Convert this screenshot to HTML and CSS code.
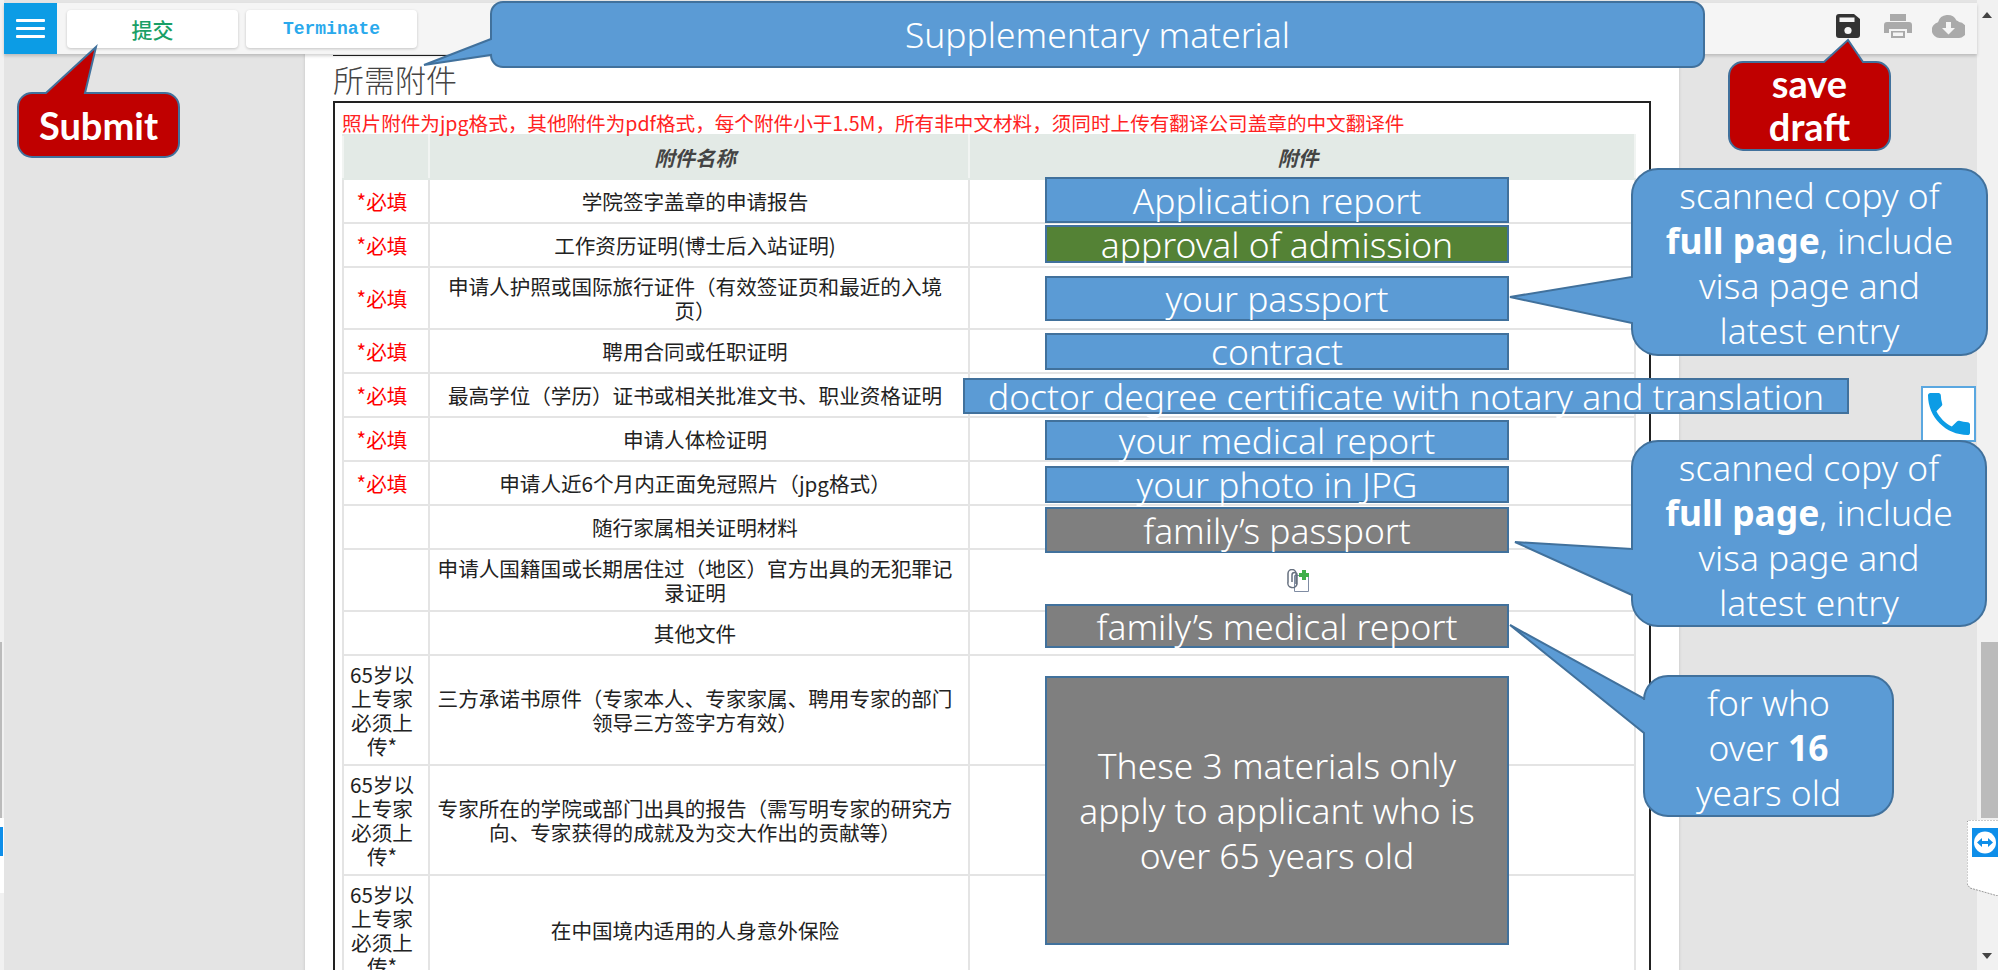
FILE: index.html
```html
<!DOCTYPE html>
<html lang="zh-CN">
<head>
    <meta charset="UTF-8">
    <title>所需附件</title>
    <link rel="stylesheet" href="styles.css">
</head>
<body>
    <div class="window">
        <div class="side-strip">
            <div class="strip-thumb"></div>
            <div class="strip-tab"><div class="strip-tab-blue"></div></div>
        </div>

        <div class="main">
            <header class="topbar">
                <button class="menu-btn" type="button" aria-label="menu">
                    <span></span><span></span><span></span>
                </button>
                <button class="tool-btn submit-btn" type="button">提交</button>
                <button class="tool-btn stop-btn" type="button">Terminate</button>
                <div class="top-icons">
                    <svg class="icon-save" viewBox="0 0 24 24" width="24" height="24">
                        <path fill="#333" d="M3 0H18L24 5V21A3 3 0 0 1 21 24H3A3 3 0 0 1 0 21V3A3 3 0 0 1 3 0Z"/>
                        <rect x="3.500" y="3.500" width="15" height="4.500" fill="#f5f5f5"/>
                        <circle cx="12" cy="16.500" r="3.600" fill="#f5f5f5"/>
                    </svg>
                    <svg class="icon-print" viewBox="0 0 28 24" width="28" height="24">
                        <path fill="#aaa" d="M6 0H22V7H6Z"/>
                        <path fill="#aaa" d="M3 8H25A3 3 0 0 1 28 11V19H23V15H5V19H0V11A3 3 0 0 1 3 8Z"/>
                        <path fill="#aaa" d="M7 17H21V24H7Z"/>
                        <rect x="9" y="18.500" width="10" height="3.500" fill="#f5f5f5"/>
                    </svg>
                    <svg class="icon-cloud" viewBox="0 0 33 24" width="33" height="24">
                        <path fill="#aaa" d="M8 24A8 8 0 0 1 6 8.200 A10 10 0 0 1 24.500 6.500 A5 5 0 0 1 27 8 A8 8 0 0 1 26 24Z"/>
                        <path fill="#f5f5f5" d="M14 8H19V14H23L16.500 20.500 10 14H14Z"/>
                    </svg>
                </div>
            </header>

            <div class="content">
                <section class="paper">
                    <div class="prev-rule"></div>
                    <h2 class="section-title">所需附件</h2>
                    <div class="frame">
                        <p class="note">照片附件为jpg格式，其他附件为pdf格式，每个附件小于1.5M，所有非中文材料，须同时上传有翻译公司盖章的中文翻译件</p>
                        <table class="files">
                            <colgroup>
                                <col class="col-flag">
                                <col class="col-name">
                                <col class="col-file">
                            </colgroup>
                            <thead>
                                <tr><th></th><th>附件名称</th><th>附件</th></tr>
                            </thead>
                            <tbody>
                                <tr><td class="req">*必填</td><td>学院签字盖章的申请报告</td><td></td></tr>
                                <tr><td class="req">*必填</td><td>工作资历证明(博士后入站证明)</td><td></td></tr>
                                <tr><td class="req">*必填</td><td>申请人护照或国际旅行证件（有效签证页和最近的入境页）</td><td></td></tr>
                                <tr><td class="req">*必填</td><td>聘用合同或任职证明</td><td></td></tr>
                                <tr><td class="req">*必填</td><td>最高学位（学历）证书或相关批准文书、职业资格证明</td><td></td></tr>
                                <tr><td class="req">*必填</td><td>申请人体检证明</td><td></td></tr>
                                <tr><td class="req">*必填</td><td>申请人近6个月内正面免冠照片（jpg格式）</td><td></td></tr>
                                <tr><td></td><td>随行家属相关证明材料</td><td></td></tr>
                                <tr>
                                    <td></td>
                                    <td>申请人国籍国或长期居住过（地区）官方出具的无犯罪记录证明</td>
                                    <td>
                                        <svg class="clip-icon" viewBox="0 0 24 23" width="24" height="23">
                                            <path fill="#fff" stroke="#7f8ca3" d="M8.500 6.500H22.500V22.500H8.500Z"/>
                                            <path fill="none" stroke="#66707f" stroke-width="1.500" d="M10 15V4.500A3.500 3.500 0 0 0 2 4.500V13A4 4 0 0 0 11 15V6A2 2 0 0 0 6 6V13"/>
                                            <path fill="#3fae49" d="M16 1H20V4H23V8H20V11H16V8H13V4H16Z"/>
                                        </svg>
                                    </td>
                                </tr>
                                <tr><td></td><td>其他文件</td><td></td></tr>
                                <tr><td class="over65">65岁以上专家必须上传*</td><td>三方承诺书原件（专家本人、专家家属、聘用专家的部门领导三方签字方有效）</td><td></td></tr>
                                <tr><td class="over65">65岁以上专家必须上传*</td><td>专家所在的学院或部门出具的报告（需写明专家的研究方向、专家获得的成就及为交大作出的贡献等）</td><td></td></tr>
                                <tr><td class="over65">65岁以上专家必须上传*</td><td>在中国境内适用的人身意外保险</td><td></td></tr>
                            </tbody>
                        </table>
                    </div>
                </section>
            </div>
        </div>

        <div class="scrollbar">
            <div class="arrow-up"></div>
            <div class="scroll-thumb"></div>
            <div class="arrow-down"></div>
        </div>
    </div>

    <!-- annotations drawn over the screenshot -->
    <div class="phone-tab">
        <svg viewBox="3 3 18 18" width="42" height="42">
            <path fill="#0c9ce5" d="M6.620 10.790c1.440 2.830 3.760 5.140 6.590 6.590l2.200-2.200c.27-.27.67-.36 1.020-.24 1.120.37 2.330.57 3.570.57.550 0 1 .45 1 1V20c0 .55-.45 1-1 1-9.390 0-17-7.610-17-17 0-.55.45-1 1-1h3.500c.55 0 1 .45 1 1 0 1.250.2 2.450.57 3.570.11.350.03.740-.25 1.020l-2.200 2.200z"/>
        </svg>
    </div>

    <svg class="viewer-tab" viewBox="0 0 31 76" width="31" height="76">
        <path fill="#fff" stroke="#999" stroke-dasharray="2 1" d="M31 0H2L0 2V64L3 68L31 76"/>
        <rect x="5" y="8" width="26" height="29" fill="#0e8ee9"/>
        <circle cx="18" cy="22.500" r="11" fill="#fff"/>
        <path fill="#0e8ee9" d="M10 22.500L15 18V21H21V18L26 22.500 21 27V24H15V27Z"/>
    </svg>

    <svg class="callouts" viewBox="0 0 1998 970" width="1998" height="970">
        <g stroke="#41719c" stroke-width="2">
            <path class="c-blue" d="M503 2H1692A12 12 0 0 1 1704 14V55A12 12 0 0 1 1692 67H503A12 12 0 0 1 491 55L424 65L491 39V14A12 12 0 0 1 503 2Z"/>
            <path class="c-red" d="M32 93H46L96 47L85 93H165A14 14 0 0 1 179 107V143A14 14 0 0 1 165 157H32A14 14 0 0 1 18 143V107A14 14 0 0 1 32 93Z"/>
            <path class="c-red" d="M1743 62H1824L1848 40L1863 62H1876A14 14 0 0 1 1890 76V136A14 14 0 0 1 1876 150H1743A14 14 0 0 1 1729 136V76A14 14 0 0 1 1743 62Z"/>
            <path class="c-blue" d="M1658 169H1961A26 26 0 0 1 1987 195V329A26 26 0 0 1 1961 355H1658A26 26 0 0 1 1632 329V323L1510 297L1632 277V195A26 26 0 0 1 1658 169Z"/>
            <path class="c-blue" d="M1658 441H1960A26 26 0 0 1 1986 467V600A26 26 0 0 1 1960 626H1658A26 26 0 0 1 1632 600V595L1515 542L1632 549V467A26 26 0 0 1 1658 441Z"/>
            <path class="c-blue" d="M1668 676H1869A24 24 0 0 1 1893 700V792A24 24 0 0 1 1869 816H1668A24 24 0 0 1 1644 792V733L1510 625L1644 698.500V700A24 24 0 0 1 1668 676Z"/>
        </g>
    </svg>

    <div class="tag tag-supp"><span>Supplementary material</span></div>
    <div class="tag tag-submit"><span>Submit</span></div>
    <div class="tag tag-save"><span>save<br>draft</span></div>
    <div class="tag tag-scan1"><span>scanned copy of<br><b>full page</b>, include<br>visa page and<br>latest entry</span></div>
    <div class="tag tag-scan2"><span>scanned copy of<br><b>full page</b>, include<br>visa page and<br>latest entry</span></div>
    <div class="tag tag-who"><span>for who<br>over <b>16</b><br>years old</span></div>

    <div class="tag box box-app"><span>Application report</span></div>
    <div class="tag box box-approval"><span>approval of admission</span></div>
    <div class="tag box box-passport"><span>your passport</span></div>
    <div class="tag box box-contract"><span>contract</span></div>
    <div class="tag box box-degree"><span>doctor degree certificate with notary and translation</span></div>
    <div class="tag box box-medical"><span>your medical report</span></div>
    <div class="tag box box-photo"><span>your photo in JPG</span></div>
    <div class="tag box grey box-family"><span>family’s passport</span></div>
    <div class="tag box grey box-fammed"><span>family’s medical report</span></div>
    <div class="tag box grey box-over65"><span>These 3 materials only<br>apply to applicant who is<br>over 65 years old</span></div>
</body>
</html>
```

FILE: styles.css
```css
html, body {
    margin: 0;
    height: 970px;
    overflow: hidden;
}
body {
    position: relative;
    background-color: #e4e4e4;
    font-family: "Noto Sans CJK SC", "Noto Sans", sans-serif;
    color: #222;
}
.window {
    display: flex;
    height: 970px;
}

/* strip on the far left */
.side-strip {
    width: 4px;
    background-color: #f1f1f1;
    padding-top: 642px;
    flex-shrink: 0;
}
.strip-thumb {
    width: 2px;
    height: 176px;
    background-color: #bbb;
}
.strip-tab {
    height: 75px;
    background-color: #fff;
    padding-top: 9px;
    box-sizing: border-box;
}
.strip-tab-blue {
    width: 3px;
    height: 29px;
    background-color: #0e8ee9;
}

.main {
    flex: 1;
    display: flex;
    flex-direction: column;
    padding-top: 3px;
    min-width: 0;
}

/* top bar */
.topbar {
    position: relative;
    z-index: 1;
    display: flex;
    align-items: center;
    gap: 8px;
    height: 51px;
    flex-shrink: 0;
    background-color: #f5f5f5;
    box-shadow: 0 2px 3px rgba(0, 0, 0, 0.18);
}
.menu-btn {
    display: flex;
    flex-direction: column;
    justify-content: center;
    gap: 5px;
    width: 53px;
    height: 51px;
    margin-right: 2px;
    padding: 0 12px;
    border: none;
    background-color: #0c9ce5;
}
.menu-btn span {
    display: block;
    height: 3px;
    border-radius: 1px;
    background-color: #fff;
}
.tool-btn {
    width: 171px;
    height: 38px;
    padding: 0;
    border: none;
    border-radius: 4px;
    background-color: #fff;
    box-shadow: 0 1px 3px rgba(0, 0, 0, 0.2);
}
.submit-btn {
    color: #1a9f66;
    font-family: "Noto Sans CJK SC", sans-serif;
    font-size: 21px;
    font-weight: 500;
}
.stop-btn {
    color: #2aa9ec;
    font-family: "Liberation Mono", monospace;
    font-size: 18px;
    font-weight: bold;
}
.top-icons {
    display: flex;
    align-items: center;
    gap: 20px;
    margin-left: auto;
    padding: 0 12px 5px 0;
}
.icon-save {
    margin-right: 4px;
}

/* white page */
.content {
    flex: 1;
    min-height: 0;
    overflow: hidden;
}
.paper {
    width: 1374px;
    min-height: 100%;
    margin-left: 301px;
    padding: 1px 28px 0;
    box-sizing: border-box;
    background-color: #fff;
    box-shadow: 0 0 3px rgba(0, 0, 0, 0.15);
}
.prev-rule {
    height: 1px;
    background-color: #222;
}
.section-title {
    margin: 5px 0 4px;
    font-size: 31px;
    font-weight: 300;
    line-height: 36px;
    color: #444;
}
.frame {
    border: 2px solid #222;
    padding: 0 14px 0 7px;
}
.note {
    margin: 0;
    padding-top: 9px;
    font-size: 19.600px;
    line-height: 22px;
    color: #f22;
    white-space: nowrap;
}
.files {
    width: 1292px;
    border-collapse: collapse;
    table-layout: fixed;
    font-size: 20.600px;
    line-height: 24px;
    text-align: center;
}
.col-flag { width: 86px; }
.col-name { width: 540px; }
.col-file { width: 666px; }
.files th, .files td {
    height: 44px;
    padding: 6px 14px 6px 6px;
    box-sizing: border-box;
    border: 2px solid #e4e4e4;
}
.files th {
    background-color: #e3eae6;
    border-color: #e3eae6 #f1f4f2;
    font-size: 20.400px;
    font-style: italic;
    font-weight: bold;
    color: #444;
}
.files .req {
    color: #f00;
    white-space: nowrap;
}
.files .over65 {
    padding: 6px 12px 6px 4px;
}
.clip-icon {
    display: block;
    margin: 0 auto;
}

/* right scrollbar */
.scrollbar {
    position: relative;
    width: 21px;
    flex-shrink: 0;
    background-color: #f1f1f1;
}
.arrow-up, .arrow-down {
    position: absolute;
    left: 5px;
    border-left: 5px solid transparent;
    border-right: 5px solid transparent;
}
.arrow-up {
    top: 12px;
    border-bottom: 6px solid #444;
}
.arrow-down {
    top: 953px;
    border-top: 6px solid #444;
}
.scroll-thumb {
    position: absolute;
    top: 642px;
    left: 4px;
    right: 0;
    height: 176px;
    background-color: #bbb;
}

/* things lying over the page */
.phone-tab {
    position: absolute;
    left: 1921px;
    top: 386px;
    width: 55px;
    height: 56px;
    box-sizing: border-box;
    display: flex;
    align-items: center;
    justify-content: center;
    background-color: #fff;
    border: 2px solid #5aa7e0;
}
.viewer-tab {
    position: absolute;
    left: 1967px;
    top: 820px;
}
.callouts {
    position: absolute;
    z-index: 2;
    left: 0;
    top: 0;
}
.c-blue { fill: #5b9bd5; }
.c-red { fill: #c00000; }

.tag {
    position: absolute;
    z-index: 3;
    display: flex;
    align-items: center;
    justify-content: center;
    text-align: center;
    box-sizing: border-box;
    color: #fff;
    font-family: "Noto Sans", sans-serif;
    font-weight: 300;
    font-size: 35.400px;
    line-height: 45px;
    white-space: nowrap;
}
.tag b {
    font-weight: 700;
}
.tag-supp { left: 491px; top: 2px; width: 1213px; height: 65px; }
.tag-submit {
    left: 18px; top: 93px; width: 161px; height: 64px;
    font-family: Lato, sans-serif;
    font-weight: 700;
    font-size: 38px;
}
.tag-save {
    left: 1729px; top: 61px; width: 161px; height: 88px;
    font-family: Lato, sans-serif;
    font-weight: 700;
    font-size: 38px;
    line-height: 43px;
}
.tag-scan1 { left: 1632px; top: 172px; width: 355px; height: 182px; }
.tag-scan2 { left: 1632px; top: 444px; width: 354px; height: 181px; }
.tag-who { left: 1644px; top: 679px; width: 249px; height: 136px; }

.box {
    background-color: #5b9bd5;
    border: 2px solid #41719c;
    left: 1045px;
    width: 464px;
}
.box.grey { background-color: #7f7f7f; }
.box-app { top: 177px; height: 46px; }
.box-approval { top: 225px; height: 38px; background-color: #548235; }
.box-passport { top: 276px; height: 45px; }
.box-contract { top: 333px; height: 37px; }
.box-degree { top: 378px; height: 36px; left: 963px; width: 886px; }
.box-medical { top: 420px; height: 40px; }
.box-photo { top: 466px; height: 37px; }
.box-family { top: 507px; height: 46px; }
.box-fammed { top: 604px; height: 44px; }
.box-over65 { top: 676px; height: 269px; }
```
